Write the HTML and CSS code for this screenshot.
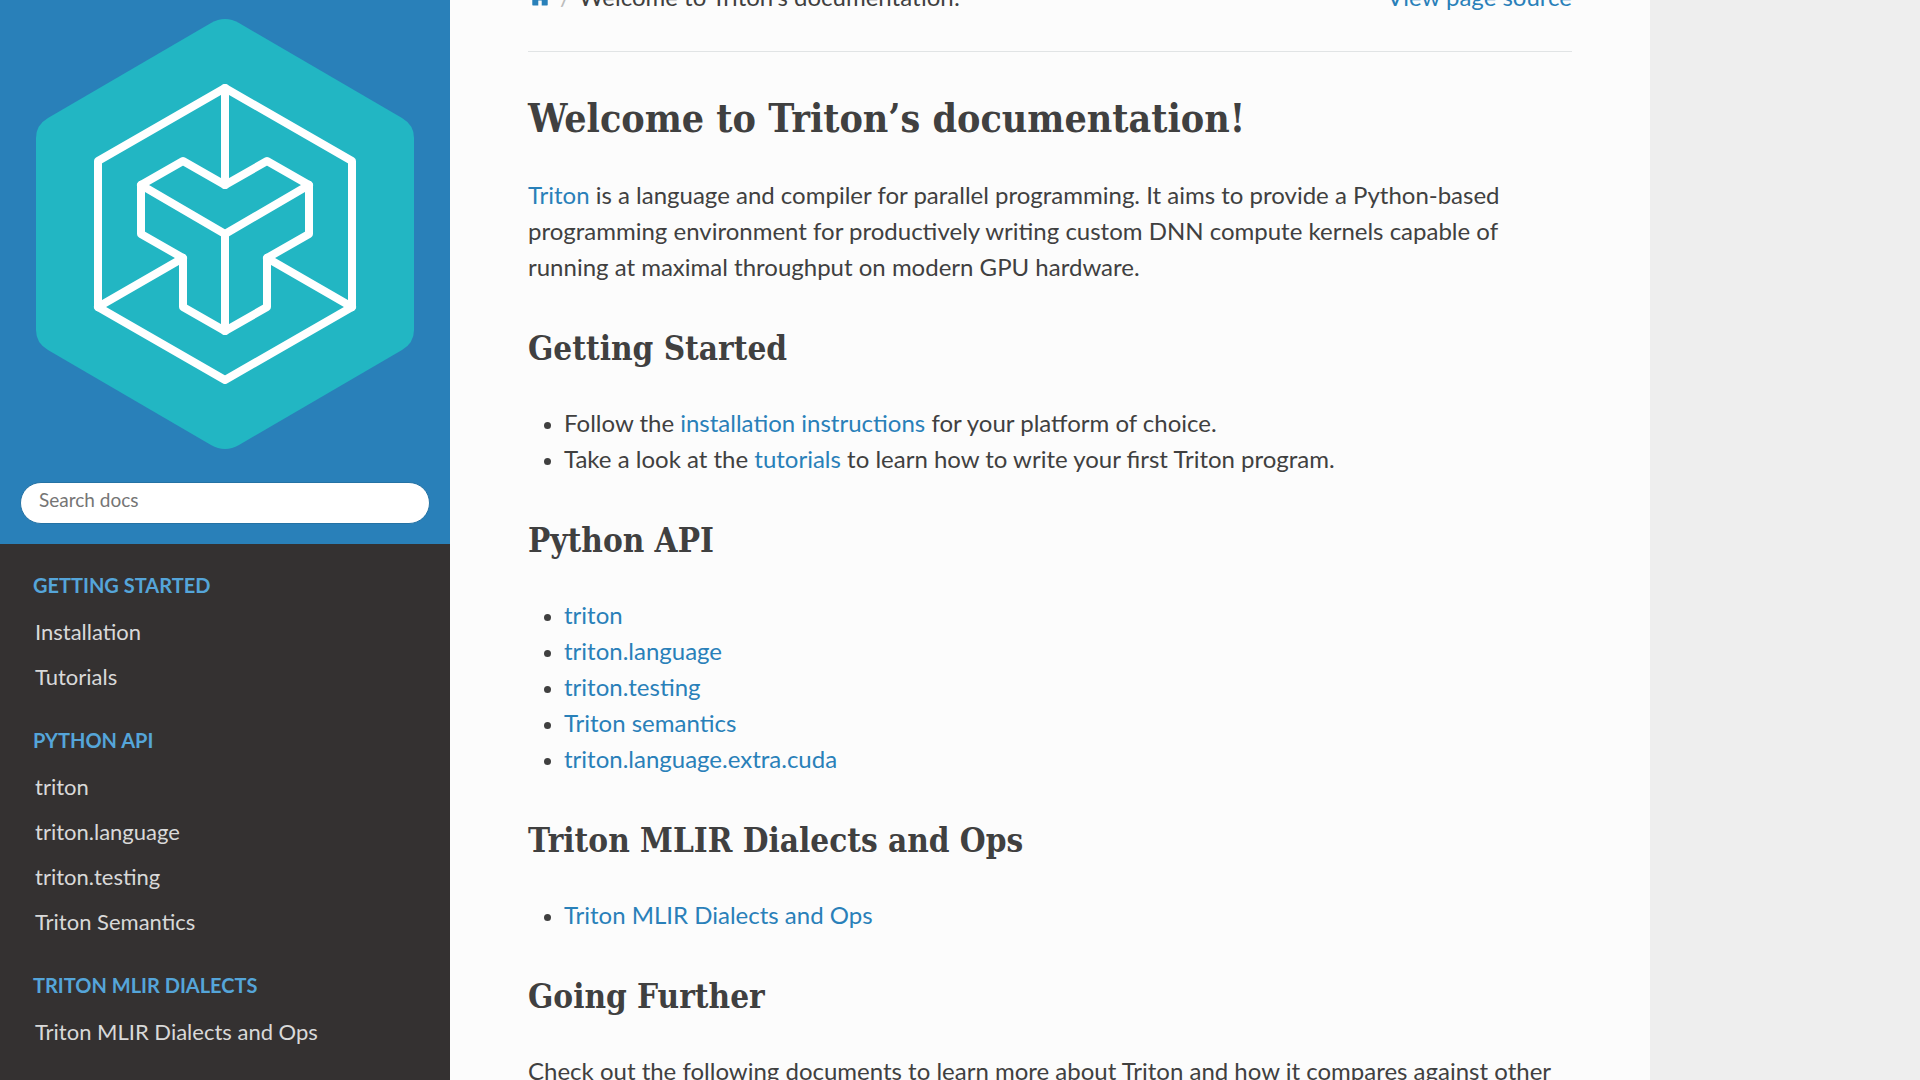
FILE: index.html
```html
<!DOCTYPE html>
<html lang="en">
<head>
<meta charset="utf-8">
<title>Welcome to Triton’s documentation!</title>
<link rel="stylesheet" href="styles.css">
</head>
<body>
<div class="layout">
  <nav class="sidebar" aria-label="Documentation">
    <div class="sidebar-header">
      <a class="logo" href="#" aria-label="Triton home">
        <svg viewBox="36 19 378 430" aria-hidden="true">
          <path fill="#22b6c3" d="M211 23Q225 15 239 23L402 118Q414 125 414 138V330Q414 343 402 350L239 445Q225 453 211 445L48 350Q36 343 36 330V138Q36 125 48 118Z"/>
          <g fill="none" stroke="#fff" stroke-width="8" stroke-linejoin="round" stroke-linecap="round">
            <path d="M225 88L352 161V307L225 380L98 307V161Z"/>
            <path d="M141 185L183 161L225 185L267 161L309 185V234L267 258V307L225 331L183 307V258L141 234Z"/>
            <path d="M141 185L225 234L309 185M225 234V331M225 88V185M98 307L183 258M352 307L267 258"/>
          </g>
        </svg>
      </a>
      <form class="search" role="search">
        <input class="search-input" type="text" placeholder="Search docs" aria-label="Search docs">
      </form>
    </div>
    <div class="menu">
      <p class="caption">Getting Started</p>
      <ul class="menu-list">
        <li><a href="#">Installation</a></li>
        <li><a href="#">Tutorials</a></li>
      </ul>
      <p class="caption">Python API</p>
      <ul class="menu-list">
        <li><a href="#">triton</a></li>
        <li><a href="#">triton.language</a></li>
        <li><a href="#">triton.testing</a></li>
        <li><a href="#">Triton Semantics</a></li>
      </ul>
      <p class="caption">Triton MLIR Dialects</p>
      <ul class="menu-list">
        <li><a href="#">Triton MLIR Dialects and Ops</a></li>
      </ul>
    </div>
  </nav>
  <main class="content-wrap">
    <div class="content">
      <div class="breadcrumbs">
        <ul class="crumbs">
          <li><a href="#" aria-label="Home"><svg class="home" viewBox="0 0 1792 1792" aria-hidden="true"><path fill="currentColor" d="M1472 992v480q0 26-19 45t-45 19h-384v-384h-256v384h-384q-26 0-45-19t-19-45v-480q0-1 .5-3t.5-3l575-474 575 474q1 2 1 6zm223-69l-62 74q-8 9-21 11h-3q-13 0-21-7l-692-577-692 577q-12 8-24 7-13-2-21-11l-62-74q-8-10-7-23.5t11-21.5l719-599q32-26 76-26t76 26l244 204v-195q0-14 9-23t23-9h192q14 0 23 9t9 23v408l219 182q10 8 11 21.5t-7 23.5z"/></svg></a></li>
          <li>Welcome to Triton’s documentation!</li>
        </ul>
        <a href="#">View page source</a>
      </div>
      <hr>
      <article>
        <h1>Welcome to Triton’s documentation!</h1>
        <p><a href="#">Triton</a> is a language and compiler for parallel programming. It aims to provide a Python-based programming environment for productively writing custom DNN compute kernels capable of running at maximal throughput on modern GPU hardware.</p>
        <h2>Getting Started</h2>
        <ul>
          <li>Follow the <a href="#">installation instructions</a> for your platform of choice.</li>
          <li>Take a look at the <a href="#">tutorials</a> to learn how to write your first Triton program.</li>
        </ul>
        <h2>Python API</h2>
        <ul>
          <li><a href="#">triton</a></li>
          <li><a href="#">triton.language</a></li>
          <li><a href="#">triton.testing</a></li>
          <li><a href="#">Triton semantics</a></li>
          <li><a href="#">triton.language.extra.cuda</a></li>
        </ul>
        <h2>Triton MLIR Dialects and Ops</h2>
        <ul>
          <li><a href="#">Triton MLIR Dialects and Ops</a></li>
        </ul>
        <h2>Going Further</h2>
        <p>Check out the following documents to learn more about Triton and how it compares against other</p>
      </article>
    </div>
  </main>
</div>
</body>
</html>
```
FILE: styles.css
```css
* {
  box-sizing: border-box;
}

body {
  margin: 0;
  background: #eee;
  color: #404040;
  font: 24px/36px Lato, sans-serif;
}

a {
  color: #2980b9;
  text-decoration: none;
}

.layout {
  display: grid;
  grid-template-columns: 450px 1fr;
  height: 100vh;
  overflow: hidden;
}

/* Sidebar */
.sidebar {
  background: #343131;
  overflow: hidden;
}

.sidebar-header {
  padding: 19px 20px 20px;
  background: #2980b9;
}

.logo {
  display: block;
  padding: 0 16px;
  margin-bottom: 33px;
}

.logo svg {
  display: block;
  width: 100%;
}

.search {
  display: flex;
}

.search-input {
  width: 100%;
  height: 42px;
  padding: 0 18px 8px;
  border: 1px solid #2472a4;
  border-radius: 24px;
  background: #fff;
  color: #404040;
  font: 19px Lato, sans-serif;
}

.search-input::placeholder {
  color: #757575;
}

.caption {
  margin: 17px 0 0;
  padding: 0 33px;
  color: #55a5d9;
  font-size: 20px;
  font-weight: 700;
  line-height: 48px;
  text-transform: uppercase;
}

.menu-list {
  margin: 0;
  padding: 0;
  list-style: none;
}

.menu-list a {
  display: block;
  padding: 9px 35px;
  color: #d9d9d9;
  font-size: 22px;
  line-height: 27px;
}

.content-wrap {
  overflow: hidden;
}

.content {
  max-width: 1200px;
  min-height: 100vh;
  margin-top: -60px;
  padding: 39px 78px;
  background: #fcfcfc;
}

.breadcrumbs {
  display: flex;
  justify-content: space-between;
}

.crumbs {
  display: flex;
  margin: 0;
  padding: 0;
  list-style: none;
}

.crumbs li + li::before {
  content: "/";
  padding: 0 8px;
  color: #bbb;
}

.home {
  width: 24px;
  height: 24px;
  vertical-align: -3px;
}

hr {
  height: 1px;
  margin: 36px 0;
  border: 0;
  background: #e1e4e5;
}

h1,
h2 {
  margin: 0 0 36px;
  padding-top: 8px;
  font-family: "Roboto Slab", "DejaVu Serif Condensed", "DejaVu Serif", serif;
  font-weight: 700;
}

h1 {
  font-size: 39px;
  line-height: 45px;
}

h2 {
  font-size: 33px;
  line-height: 40px;
}

article p,
article ul {
  margin: 0 0 36px;
}

article ul {
  padding-left: 36px;
}

article li::marker {
  font-size: 20px;
}
```
